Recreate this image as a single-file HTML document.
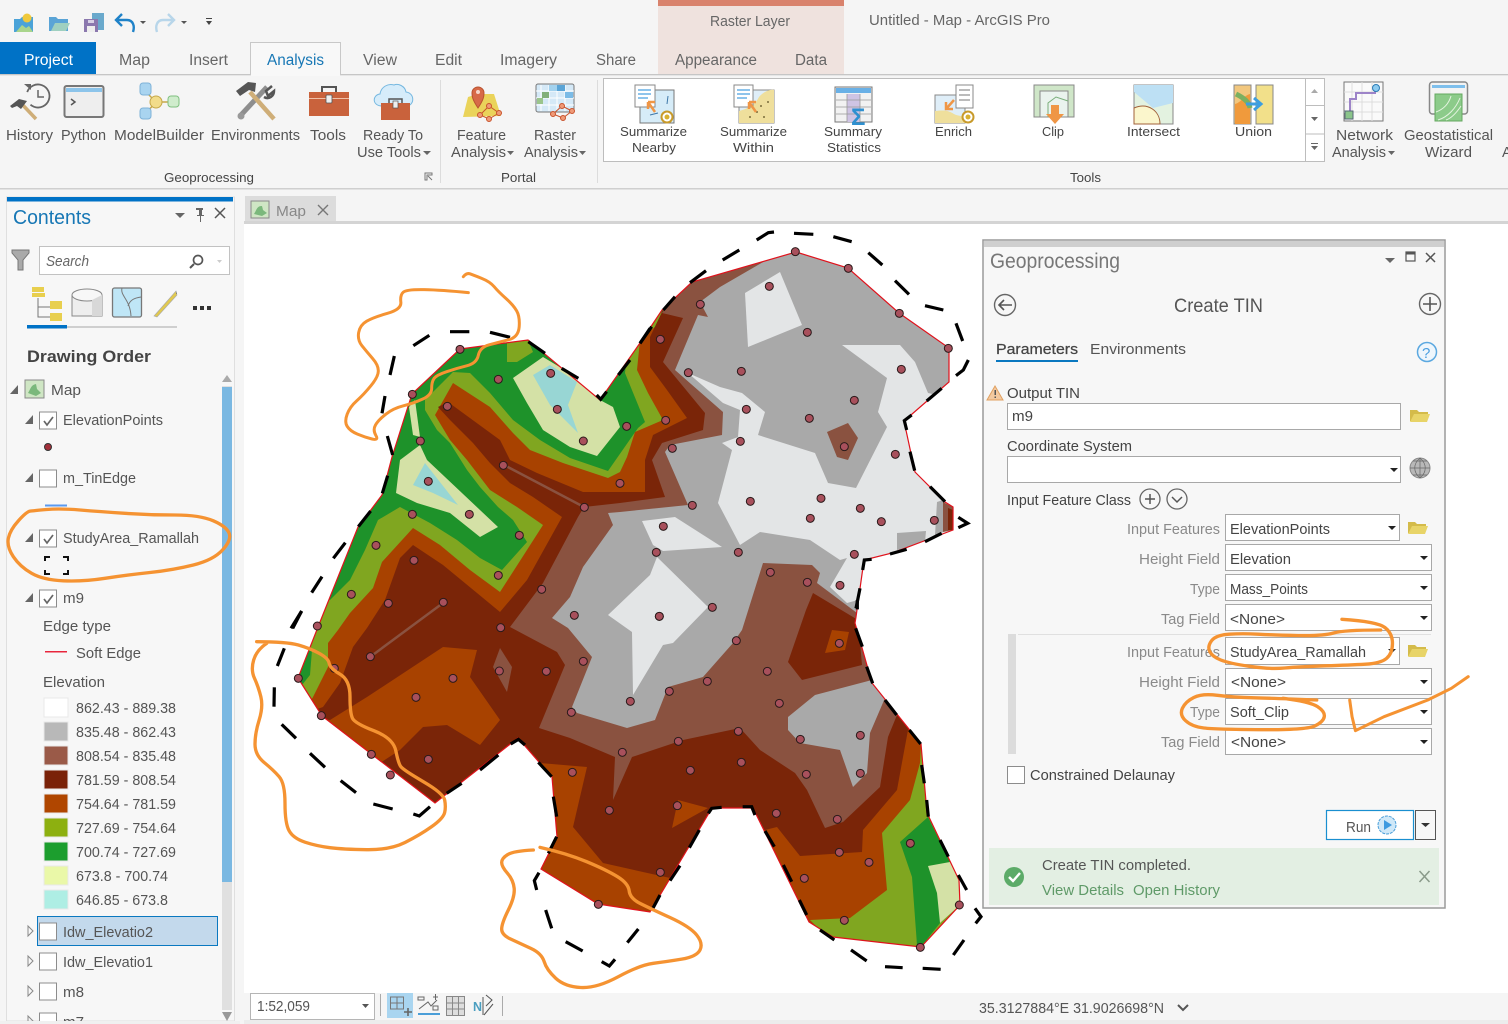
<!DOCTYPE html>
<html><head><meta charset="utf-8"><title>Untitled - Map - ArcGIS Pro</title>
<style>
html,body{margin:0;padding:0;background:#f5f5f5;overflow:hidden}
svg{display:block;filter:blur(.3px)}
text{font-family:"Liberation Sans",sans-serif;fill:#555;font-size:15px;white-space:pre}
.r{font-size:14.5px}.g{font-size:13px;fill:#444}.tb{font-size:15.5px;fill:#666}
.c{font-size:14.5px;fill:#555}.v{font-size:14.5px;fill:#444}.l{font-size:14.5px;fill:#8a8a8a}
.d circle{fill:#a8505c;stroke:#2a1a1a;stroke-width:3}
.dash3{fill:none;stroke:#000;stroke-width:9.6}
.sc{fill:none;stroke:#f59332;stroke-linejoin:round;stroke-linecap:round}
.f{fill:#fff;stroke:#a8a8a8;stroke-width:1}
.cb{fill:#fff;stroke:#8c8c8c;stroke-width:1}
.ck{fill:none;stroke:#666;stroke-width:1.7}
.ar{fill:#222}
</style></head><body>
<svg width="1508" height="1024" viewBox="0 0 1508 1024" xmlns="http://www.w3.org/2000/svg">
<defs>
<clipPath id="o"><polygon points="796,252 848,268 899,313 949,348 949,382 904,421 915,472 945,502 953,507 953,530 892,553 864,560 856,617 855,623 872,683 921,744 927,813 959,880 960,905 921,947 833,937 809,922 753,808 712,808 650,912 598,904 541,869 557,837 552,777 518,738 435,803 322,716 298,678 318,627 358,527 382,495 392,457 412,394 460,349 528,340 600,400 640,343 662,310 692,282"/></clipPath>
<g id="fo"><path d="M0 3h7l2 2h9v2H5L2 14H0z" fill="#d4bb4a"/><path d="M4 7h16l-3 8H0z" fill="#e8d468"/></g>
<g id="coin"><circle r="6.5" fill="#c89a2a"/><circle r="4.5" fill="#fff"/><circle r="2.5" fill="#d8b030"/></g>
</defs>
<rect width="1508" height="1024" fill="#f5f5f5"/>

<!-- context tab -->
<rect x="658" y="0" width="186" height="74" fill="#efe2de"/><rect x="658" y="0" width="186" height="6" fill="#d9826c"/>
<!-- QAT -->
<path d="M14 19h6l2-2h11v15H14z" fill="#4ba3d8"/><path d="M16 32l6-7 4 3 3-2 4 6z" fill="#a9d58c"/><circle cx="27" cy="18" r="4.500" fill="#f0c93c"/>
<path d="M49 17h7l2 2h10v12H49z" fill="#5aa4d6"/><path d="M51 31l4-8h15l-4 8z" fill="#9fd0c0"/>
<rect x="92" y="13" width="12" height="17" fill="#6aa9cc"/><rect x="84" y="19" width="14" height="13" fill="#8b78ae"/><rect x="87" y="26" width="8" height="6" fill="#eee"/><rect x="88" y="20" width="6" height="3" fill="#d8d2e6"/>
<path d="M122 14l-6 6 6 6M117 20h10c6 0 8 6 6 12" fill="none" stroke="#1f82c8" stroke-width="2.400"/>
<path d="M140 21h6l-3 3z" fill="#555"/>
<path d="M168 14l6 6-6 6M173 20h-10c-6 0-8 6-6 12" fill="none" stroke="#b8d6ea" stroke-width="2.400"/>
<path d="M181 21h6l-3 3z" fill="#555"/>
<path d="M206 18h6v1h-6zM206 21h6l-3 4z" fill="#444"/>

<!-- tabs -->
<rect x="0" y="74" width="1508" height="1.3" fill="#c6c6c6"/>
<rect x="0" y="42" width="96" height="32" fill="#0072c6"/>
<path d="M250.500 75V42.500H340.500V75" fill="#f8f8f8" stroke="#c8c8c8"/><rect x="251" y="73" width="89" height="3" fill="#f8f8f8"/>
<text x="24" y="65" textLength="49" lengthAdjust="spacingAndGlyphs" class="tb" style="fill:#fff">Project</text>
<text x="119" y="65" textLength="31" lengthAdjust="spacingAndGlyphs" class="tb">Map</text>
<text x="189" y="65" textLength="39" lengthAdjust="spacingAndGlyphs" class="tb">Insert</text>
<text x="267" y="65" textLength="57" lengthAdjust="spacingAndGlyphs" class="tb" style="fill:#1777b5">Analysis</text>
<text x="363" y="65" textLength="34" lengthAdjust="spacingAndGlyphs" class="tb">View</text>
<text x="435" y="65" textLength="27" lengthAdjust="spacingAndGlyphs" class="tb">Edit</text>
<text x="500" y="65" textLength="57" lengthAdjust="spacingAndGlyphs" class="tb">Imagery</text>
<text x="596" y="65" textLength="40" lengthAdjust="spacingAndGlyphs" class="tb">Share</text>
<text x="675" y="65" textLength="82" lengthAdjust="spacingAndGlyphs" class="tb">Appearance</text>
<text x="795" y="65" textLength="32" lengthAdjust="spacingAndGlyphs" class="tb">Data</text>
<text x="710" y="26" textLength="80" lengthAdjust="spacingAndGlyphs" class="tb" style="font-size:14.500px">Raster Layer</text>
<text x="869" y="25" textLength="181" lengthAdjust="spacingAndGlyphs" class="tb" style="font-size:14.500px">Untitled - Map - ArcGIS Pro</text>

<!-- ribbon -->
<rect x="0" y="188" width="1508" height="1.500" fill="#cfcfcf"/>
<rect x="440" y="80" width="1" height="103" fill="#dcdcdc"/><rect x="597" y="80" width="1" height="103" fill="#dcdcdc"/>
<rect x="603.500" y="78.500" width="721" height="83" fill="#fff" stroke="#bdbdbd"/>
<path d="M1305.500 78v84M1305 105.500h19M1305 134h19" stroke="#bdbdbd" fill="none"/>
<path d="M1311 93l3.500-4 3.500 4z" fill="#aaa"/><path d="M1311 117h7l-3.500 4z" fill="#666"/><path d="M1311 143h7v1h-7zM1311 146h7l-3.500 4z" fill="#666"/>

<text x="6" y="140" textLength="47" lengthAdjust="spacingAndGlyphs" class="r">History</text>
<text x="61" y="140" textLength="45" lengthAdjust="spacingAndGlyphs" class="r">Python</text>
<text x="114" y="140" textLength="90" lengthAdjust="spacingAndGlyphs" class="r">ModelBuilder</text>
<text x="211" y="140" textLength="89" lengthAdjust="spacingAndGlyphs" class="r">Environments</text>
<text x="310" y="140" textLength="36" lengthAdjust="spacingAndGlyphs" class="r">Tools</text>
<text x="363" y="140" textLength="60" lengthAdjust="spacingAndGlyphs" class="r">Ready To</text>
<text x="357" y="157" textLength="64" lengthAdjust="spacingAndGlyphs" class="r">Use Tools</text><path d="M423 151h8l-4 4z" fill="#666"/>
<text x="457" y="140" textLength="49" lengthAdjust="spacingAndGlyphs" class="r">Feature</text>
<text x="451" y="157" textLength="55" lengthAdjust="spacingAndGlyphs" class="r">Analysis</text><path d="M507 151h7l-3.500 4z" fill="#666"/>
<text x="534" y="140" textLength="42" lengthAdjust="spacingAndGlyphs" class="r">Raster</text>
<text x="524" y="157" textLength="54" lengthAdjust="spacingAndGlyphs" class="r">Analysis</text><path d="M579 151h7l-3.500 4z" fill="#666"/>
<text x="1336" y="140" textLength="57" lengthAdjust="spacingAndGlyphs" class="r">Network</text>
<text x="1332" y="157" textLength="54" lengthAdjust="spacingAndGlyphs" class="r">Analysis</text><path d="M1388 151h7l-3.500 4z" fill="#666"/>
<text x="1404" y="140" textLength="89" lengthAdjust="spacingAndGlyphs" class="r">Geostatistical</text>
<text x="1425" y="157" textLength="47" lengthAdjust="spacingAndGlyphs" class="r">Wizard</text>
<text x="1502" y="157" class="r">A</text>
<text x="164" y="182" textLength="90" lengthAdjust="spacingAndGlyphs" class="g">Geoprocessing</text>
<text x="501" y="182" textLength="35" lengthAdjust="spacingAndGlyphs" class="g">Portal</text>
<text x="1070" y="182" textLength="31" lengthAdjust="spacingAndGlyphs" class="g">Tools</text>
<path d="M425 173h7v2h-5v5h-2zM428 176l4 4" stroke="#777" fill="none"/>
<text x="620" y="136" textLength="67" lengthAdjust="spacingAndGlyphs" class="g">Summarize</text>
<text x="632" y="152" textLength="44" lengthAdjust="spacingAndGlyphs" class="g">Nearby</text>
<text x="720" y="136" textLength="67" lengthAdjust="spacingAndGlyphs" class="g">Summarize</text>
<text x="733" y="152" textLength="41" lengthAdjust="spacingAndGlyphs" class="g">Within</text>
<text x="824" y="136" textLength="58" lengthAdjust="spacingAndGlyphs" class="g">Summary</text>
<text x="827" y="152" textLength="54" lengthAdjust="spacingAndGlyphs" class="g">Statistics</text>
<text x="935" y="136" textLength="37" lengthAdjust="spacingAndGlyphs" class="g">Enrich</text>
<text x="1042" y="136" textLength="22" lengthAdjust="spacingAndGlyphs" class="g">Clip</text>
<text x="1127" y="136" textLength="53" lengthAdjust="spacingAndGlyphs" class="g">Intersect</text>
<text x="1235" y="136" textLength="37" lengthAdjust="spacingAndGlyphs" class="g">Union</text>

<!-- ribbon icons -->
<circle cx="38" cy="96" r="11.500" fill="none" stroke="#666" stroke-width="1.800" stroke-dasharray="58 14" transform="rotate(200 38 96)"/><path d="M38 90v7h6" fill="none" stroke="#666" stroke-width="1.500"/><path d="M24 84h7v6z" fill="#666"/>
<path d="M19 101l17 18" stroke="#cfae78" stroke-width="3.500"/><path d="M10 106l9-7 8 2-6 8-4-3-5 2z" fill="#555"/>
<rect x="64.500" y="86" width="39" height="31" rx="2" fill="#eee" stroke="#777" stroke-width="2"/><rect x="66" y="88" width="36" height="4" fill="#8cc4ea"/><path d="M71 99l4 3-4 3" fill="none" stroke="#555" stroke-width="1.500"/>
<path d="M146 92l10 10-10 11M156 102h14" stroke="#c7a84a" stroke-width="1.500" fill="none"/>
<rect x="140" y="83" width="11" height="12" rx="3" fill="#a9d4f0" stroke="#7fb2d8"/><rect x="140" y="108" width="11" height="11" rx="3" fill="#a9d4f0" stroke="#7fb2d8"/><circle cx="156" cy="102" r="6" fill="#f2dc8a" stroke="#c5a84a"/><rect x="168" y="96" width="11" height="11" rx="3" fill="#cfeccc" stroke="#7fc07f"/>
<path d="M241 115l26-28" stroke="#8e8e8e" stroke-width="5"/><path d="M272 86l-6 5 2 5 6-5c0 5-5 9-10 6" fill="none" stroke="#555" stroke-width="2.500"/><circle cx="241" cy="116" r="3.500" fill="#999"/>
<path d="M250 92l24 27" stroke="#cfae78" stroke-width="4.500"/><path d="M236 91l12-9 8 1-1 9-6-2-9 6z" fill="#555"/>
<rect x="309" y="92" width="40" height="24" fill="#c9623c"/><path d="M322 92v-5h14v5" fill="none" stroke="#555" stroke-width="2"/><rect x="309" y="98" width="40" height="1" fill="#f0c0a8"/><rect x="326" y="95" width="6" height="8" rx="1" fill="#eee" stroke="#555" stroke-width=".8"/>
<path d="M382 106c-10 0-10-11-2-12 1-7 8-11 14-9 4-2 11 1 12 7 9 1 9 14 0 14z" fill="#d6ecfa" stroke="#76b8e0"/>
<rect x="381" y="103" width="29" height="17" fill="#c9623c"/><path d="M389 103v-4h13v4" fill="none" stroke="#555" stroke-width="1.500"/><rect x="393" y="101" width="5" height="7" fill="#eee" stroke="#555" stroke-width=".7"/>
<path d="M468 97l10-3 16 0 7 22-38 1z" fill="#ead35a"/><path d="M478 108c-6-9-6-12-6-15a6 6 0 0 1 12 0c0 3 0 6-6 15z" fill="#d76a48" stroke="#b9532f"/><circle cx="478" cy="92" r="2" fill="#f5d6c9"/>
<g fill="#ef9a78" stroke="#c9532c"><path d="M480 115l9-9 10 7-10 6z" fill="none"/><circle cx="480" cy="115" r="2.500"/><circle cx="489" cy="106" r="2.500"/><circle cx="499" cy="113" r="2.500"/><circle cx="489" cy="119" r="2.500"/></g>
<rect x="536" y="84" width="38" height="28" rx="2" fill="#d5e9f7" stroke="#777"/>
<path d="M541 85v26M549 85v26M557 85v26M565 85v26M536 91h38M536 98h38M536 105h38" stroke="#fff" stroke-width="1"/>
<rect x="542" y="92" width="7" height="6" fill="#82b07a"/><rect x="557" y="85" width="8" height="6" fill="#5aa4d6"/><rect x="549" y="85" width="8" height="6" fill="#a3d2ee"/><rect x="565" y="92" width="8" height="6" fill="#7bbbe6"/><rect x="537" y="98" width="6" height="6" fill="#9bc58c"/>
<g fill="#ef9a78" stroke="#c9532c"><path d="M553 114l9-8 10 5-9 7z" fill="none"/><circle cx="553" cy="114" r="2.500"/><circle cx="562" cy="106" r="2.500"/><circle cx="572" cy="111" r="2.500"/><circle cx="563" cy="118" r="2.500"/></g>

<rect x="640" y="90" width="34" height="33" fill="#d6ecf8" stroke="#777"/><path d="M650 115l8-2M668 96l-1 8" stroke="#3d77a8"/>
<rect x="635" y="85" width="20" height="22" fill="#fff" stroke="#888"/><path d="M638 90h13M638 94h13M638 98h10" stroke="#69b0e6" stroke-width="1.500"/>
<path d="M655 112l-7-10M648 102v7M648 102h7" stroke="#ef9646" stroke-width="2.500" fill="none"/><use href="#coin" x="667" y="117"/>
<rect x="739" y="90" width="35" height="33" fill="#dfeef8" stroke="#888"/><path d="M739 123v-12c8-2 16-6 20-14 4-5 11-8 15-7v33z" fill="#efdf9c"/>
<g fill="#7a6c3a"><circle cx="750" cy="117" r="1"/><circle cx="757" cy="112" r="1"/><circle cx="764" cy="117" r="1"/><circle cx="768" cy="102" r="1"/><circle cx="761" cy="106" r="1"/></g>
<rect x="734" y="85" width="19" height="22" fill="#fff" stroke="#888"/><path d="M737 90h13M737 94h13M737 98h10" stroke="#69b0e6" stroke-width="1.500"/>
<path d="M756 112l-7-10M749 102v7M749 102h7" stroke="#ef9646" stroke-width="2.500" fill="none"/>
<rect x="835" y="87" width="37" height="35" fill="#f2f2f2" stroke="#777"/><rect x="836" y="88" width="35" height="5" fill="#69b0e6"/><rect x="847" y="94" width="13" height="28" fill="#cfc4e4"/>
<path d="M836 100h35M836 107h35M836 114h35M847 94v28M860 94v28" stroke="#999" stroke-width=".8"/><text x="851" y="125" style="font-size:24px;fill:#2f90d0;font-weight:bold">&#931;</text>
<rect x="935" y="95" width="30" height="28" fill="#dfeef8" stroke="#888"/><path d="M935 123v-12c8-1 13-1 19 3 3 2 7 1 11 4v5z" fill="#efdf9c"/>
<rect x="956" y="85" width="17" height="23" fill="#fff" stroke="#888"/><path d="M959 90h11M959 95h11M959 100h11" stroke="#777"/>
<path d="M954 100l-8 9M946 102v7h7" stroke="#ef9646" stroke-width="2.500" fill="none"/><use href="#coin" x="968" y="117"/>
<rect x="1034" y="85" width="40" height="32" fill="#cfe6c8" stroke="#888"/><rect x="1040" y="91" width="28" height="26" fill="#eaf3ee" stroke="#888"/><path d="M1048 117v-14l8-6 12 4" fill="none" stroke="#79ae7a"/>
<path d="M1051 105h8v9h5l-9 10-9-10h5z" fill="#ef9646"/>
<rect x="1134" y="85" width="39" height="39" fill="#e3f2e0" stroke="#888"/><path d="M1134 85h39v18l-20 5-19-16z" fill="#bde0f4"/><path d="M1134 108c14-6 26 3 26 16h-26z" fill="#fbf6cc" stroke="#a0603a"/>
<rect x="1234" y="85" width="17" height="39" fill="#f2c77e" stroke="#888"/><path d="M1235 124v-20c7-2 8-8 15-10v30z" fill="#f09a3c"/><path d="M1236 94c8 4 13 8 14 14" stroke="#7bb060" stroke-width="5" fill="none"/>
<rect x="1256" y="85" width="17" height="39" fill="#f2e08a" stroke="#888"/><path d="M1246 104h14m-6-6l7 6-7 6" stroke="#3d9ee0" stroke-width="3" fill="none"/>
<rect x="1344" y="82" width="39" height="39" fill="#fafafa" stroke="#777"/><path d="M1352 82v39M1362 82v39M1372 82v39M1344 92h39M1344 102h39M1344 112h39" stroke="#ddd"/><path d="M1350 113v-14h6v-6h19v-8" stroke="#9d84c8" stroke-width="2" fill="none"/><rect x="1345" y="111" width="8" height="8" fill="#8ac48a" stroke="#567"/><circle cx="1376" cy="88" r="3.500" fill="#8ccbf0" stroke="#2b7cb6"/>
<rect x="1429.500" y="82" width="38" height="32" rx="3" fill="#f3f3f3" stroke="#888" stroke-width="1.500"/><rect x="1432" y="85" width="33" height="3" fill="#7ebfec"/>
<rect x="1435" y="94" width="27" height="27" fill="#8ccb8a" stroke="#65a860"/><path d="M1438 120c10-3 18-12 22-22M1446 120c6-2 11-8 15-14M1436 112c8-3 13-9 15-16" stroke="#e4f4e0" fill="none"/>

<!-- Contents pane -->
<rect x="6.500" y="197" width="228" height="824" fill="#f7f7f7" stroke="#dfdfdf"/><rect x="7" y="197" width="226" height="4.500" fill="#0072c6"/>
<text x="13" y="224" textLength="78" lengthAdjust="spacingAndGlyphs" style="font-size:20px;fill:#1777b5">Contents</text>
<path d="M175 213h10l-5 5z" fill="#666"/><path d="M196 208h7v2h-1v5h2v1h-3v6h-1v-6h-3v-1h2v-5h-3z" fill="#666"/><path d="M215 208l10 10M225 208l-10 10" stroke="#555" stroke-width="1.500"/>
<path d="M12 250h17v3l-6 7v10h-5v-10l-6-7z" fill="#aaa" stroke="#777"/>
<rect x="39.500" y="246.500" width="190" height="28" fill="#fff" stroke="#c2c2c2"/>
<text x="46" y="266" textLength="43" lengthAdjust="spacingAndGlyphs" style="font-size:14.500px;font-style:italic;fill:#666">Search</text>
<circle cx="198" cy="260" r="4.500" fill="none" stroke="#555" stroke-width="1.700"/><path d="M194 264l-4 4" stroke="#555" stroke-width="2"/><path d="M217 260h5l-2.500 3z" fill="#ccc"/>
<rect x="32" y="287" width="12" height="5" fill="#e8cf4e"/><rect x="32" y="293" width="13" height="4" fill="#e8cf4e"/><path d="M38 298v19h12M38 307h12" stroke="#777" fill="none"/><rect x="50" y="301" width="12" height="8" fill="#e8cf4e"/><rect x="50" y="313" width="12" height="8" fill="#e8cf4e"/>
<rect x="72" y="295" width="30" height="21" fill="#eee" stroke="#888"/><ellipse cx="87" cy="295" rx="15" ry="6" fill="#f7f7f7" stroke="#888"/><path d="M92 300v16h10v-21z" fill="#d8d8d8"/>
<rect x="112.500" y="288" width="29" height="29" rx="2" fill="#bfe6f6" stroke="#777" stroke-width="1.300"/><path d="M122 288c-2 8 8 11 9 28M128 306c2-6 6-8 13-9" stroke="#777" fill="none"/>
<path d="M154 316l22-25 1 4-20 22z" fill="#e1c94f" stroke="#aaa" stroke-width=".6"/><path d="M176 291l1 3-1 0z" fill="#777"/>
<rect x="193" y="306" width="4" height="4" fill="#333"/><rect x="200" y="306" width="4" height="4" fill="#333"/><rect x="207" y="306" width="4" height="4" fill="#333"/>
<rect x="67" y="326" width="110" height="2" fill="#cfcfcf"/><rect x="27" y="325" width="40" height="3.500" fill="#0072c6"/>
<text x="27" y="362" textLength="124" lengthAdjust="spacingAndGlyphs" style="font-size:17px;font-weight:bold;fill:#444">Drawing Order</text>

<path d="M18 385v9h-8z" fill="#666"/><rect x="25" y="380" width="19" height="18" fill="#cfe6c4" stroke="#888"/><path d="M28 393c3-5 3-8 8-9l1 5 4 4-5 3z" fill="#7bb87c"/>
<text x="51" y="395" textLength="30" lengthAdjust="spacingAndGlyphs" class="c">Map</text>
<path d="M33 415v9h-8z" fill="#666"/><rect x="39.500" y="412" width="17" height="17" class="cb"/><path d="M44 421l3 4 6-8" class="ck"/>
<text x="63" y="425" textLength="100" lengthAdjust="spacingAndGlyphs" class="c">ElevationPoints</text>
<circle cx="48" cy="447" r="3.500" fill="#a3303a" stroke="#333"/>
<path d="M33 473v9h-8z" fill="#666"/><rect x="39.500" y="470" width="17" height="17" class="cb"/>
<text x="63" y="483" textLength="73" lengthAdjust="spacingAndGlyphs" class="c">m_TinEdge</text>
<rect x="45" y="504.500" width="22" height="2" fill="#5a9af0"/>
<path d="M33 533v9h-8z" fill="#666"/><rect x="39.500" y="530" width="17" height="17" class="cb"/><path d="M44 539l3 4 6-8" class="ck"/>
<text x="63" y="543" textLength="136" lengthAdjust="spacingAndGlyphs" class="c">StudyArea_Ramallah</text>
<path d="M45 561v-4h5M63 557h5v4M45 570v4h5M63 574h5v-4" fill="none" stroke="#111" stroke-width="2"/>
<path d="M33 593v9h-8z" fill="#666"/><rect x="39.500" y="590" width="17" height="17" class="cb"/><path d="M44 599l3 4 6-8" class="ck"/>
<text x="63" y="603" textLength="21" lengthAdjust="spacingAndGlyphs" class="c">m9</text>
<text x="43" y="631" textLength="68" lengthAdjust="spacingAndGlyphs" class="c">Edge type</text>
<rect x="45" y="651" width="22" height="1.500" fill="#e8263c"/>
<text x="76" y="658" textLength="65" lengthAdjust="spacingAndGlyphs" class="c">Soft Edge</text>
<text x="43" y="687" textLength="62" lengthAdjust="spacingAndGlyphs" class="c">Elevation</text>
<g stroke="#e8e8e8" stroke-width="1">
<rect x="44" y="698" width="24" height="19" fill="#fff"/><rect x="44" y="722" width="24" height="19" fill="#b8b8b8"/><rect x="44" y="746" width="24" height="19" fill="#9a5a48"/><rect x="44" y="770" width="24" height="19" fill="#7a2208"/><rect x="44" y="794" width="24" height="19" fill="#b04600"/><rect x="44" y="818" width="24" height="19" fill="#8db010"/><rect x="44" y="842" width="24" height="19" fill="#1c9e2e"/><rect x="44" y="866" width="24" height="19" fill="#eaf8a8"/><rect x="44" y="890" width="24" height="19" fill="#aeeee4"/>
</g>
<text x="76" y="713" textLength="100" lengthAdjust="spacingAndGlyphs" class="c">862.43 - 889.38</text>
<text x="76" y="737" textLength="100" lengthAdjust="spacingAndGlyphs" class="c">835.48 - 862.43</text>
<text x="76" y="761" textLength="100" lengthAdjust="spacingAndGlyphs" class="c">808.54 - 835.48</text>
<text x="76" y="785" textLength="100" lengthAdjust="spacingAndGlyphs" class="c">781.59 - 808.54</text>
<text x="76" y="809" textLength="100" lengthAdjust="spacingAndGlyphs" class="c">754.64 - 781.59</text>
<text x="76" y="833" textLength="100" lengthAdjust="spacingAndGlyphs" class="c">727.69 - 754.64</text>
<text x="76" y="857" textLength="100" lengthAdjust="spacingAndGlyphs" class="c">700.74 - 727.69</text>
<text x="76" y="881" textLength="92" lengthAdjust="spacingAndGlyphs" class="c">673.8 - 700.74</text>
<text x="76" y="905" textLength="92" lengthAdjust="spacingAndGlyphs" class="c">646.85 - 673.8</text>
<rect x="37.500" y="916.500" width="180" height="29" fill="#c3d9ec" stroke="#0a78c0"/>
<rect x="39.500" y="923" width="17" height="17" class="cb"/>
<text x="63" y="937" textLength="90" lengthAdjust="spacingAndGlyphs" class="c">Idw_Elevatio2</text>
<path d="M28 926l5 5-5 5z" fill="none" stroke="#888"/>
<rect x="39.500" y="953" width="17" height="17" class="cb"/>
<text x="63" y="967" textLength="90" lengthAdjust="spacingAndGlyphs" class="c">Idw_Elevatio1</text>
<path d="M28 956l5 5-5 5z" fill="none" stroke="#888"/>
<rect x="39.500" y="983" width="17" height="17" class="cb"/>
<text x="63" y="997" textLength="21" lengthAdjust="spacingAndGlyphs" class="c">m8</text>
<path d="M28 986l5 5-5 5z" fill="none" stroke="#888"/>
<rect x="39.500" y="1013" width="17" height="17" class="cb"/>
<text x="63" y="1027" textLength="21" lengthAdjust="spacingAndGlyphs" class="c">m7</text>
<path d="M28 1016l5 5-5 5z" fill="none" stroke="#888"/>
<rect x="0" y="1021" width="240" height="3" fill="#f0f0f0"/>
<rect x="222" y="386" width="10" height="624" fill="#e0e0e0"/><rect x="222" y="387" width="10" height="495" fill="#7ab8e2"/>
<path d="M222 382l5-7 5 7z" fill="#aaa"/><path d="M222 1012h10l-5 9z" fill="#999"/>

<!-- Map view -->
<rect x="245" y="196" width="91" height="25" fill="#dcdcdc"/>
<rect x="251" y="201" width="18" height="17" fill="#cfe6c4" stroke="#888"/><path d="M254 214c3-5 3-8 8-8l1 4 4 3-5 3z" fill="#7bb87c"/>
<text x="276" y="216" textLength="30" lengthAdjust="spacingAndGlyphs" style="font-size:15px;fill:#888">Map</text>
<path d="M318 205l10 10M328 205l-10 10" stroke="#777" stroke-width="1.400"/>
<rect x="244" y="221" width="1264" height="3" fill="#d4d4d4"/>
<rect x="244" y="224" width="1264" height="769" fill="#fff"/>
<rect x="244" y="993" width="1264" height="27" fill="#f5f5f5"/><rect x="244" y="1020" width="1264" height="4" fill="#ececec"/>
<rect x="250.500" y="993.500" width="124" height="26" fill="#fff" stroke="#b5b5b5"/>
<text x="257" y="1011" textLength="53" lengthAdjust="spacingAndGlyphs" style="font-size:15px;fill:#555">1:52,059</text><path d="M362 1004h7l-3.500 4z" fill="#555"/>
<rect x="380" y="994" width="1" height="22" fill="#aaa"/>
<rect x="387" y="993" width="26" height="25" fill="#a9d5f0"/><path d="M390.500 997h13v12h-13zM390.500 1003h13M397 997v12" fill="none" stroke="#777"/><path d="M404 1012h8M408 1008v8" stroke="#666" stroke-width="1.600"/>
<path d="M418 1014h22" stroke="#4a9ed8" stroke-width="2"/><path d="M419 1009l9-7 3 4 6-6M433 997h5M435.500 994v6" stroke="#666" fill="none"/><rect x="418" y="997" width="6" height="3" fill="none" stroke="#666"/><rect x="433" y="1006" width="5" height="4" fill="none" stroke="#666"/>
<rect x="446.500" y="996.500" width="18" height="19" fill="#ddd" stroke="#888"/><path d="M452.500 997v19M458.500 997v19M447 1003h18M447 1009h18" stroke="#888"/>
<text x="473" y="1011" style="font-size:12.500px;font-weight:bold;fill:#4a9ec0">N</text><path d="M483 997v18M484 1015l9-11M486 995l6 5-6 6" fill="none" stroke="#555"/>
<rect x="502" y="996" width="1" height="20" fill="#aaa"/>
<text x="979" y="1013" textLength="185" lengthAdjust="spacingAndGlyphs" style="font-size:14.500px;fill:#555">35.3127884°E 31.9026698°N</text>
<path d="M1178 1005l5 5 5-5" fill="none" stroke="#555" stroke-width="2"/>

<!-- TIN map -->
<g clip-path="url(#o)">
<rect x="250" y="230" width="740" height="730" fill="#1e922a"/>
<polygon fill="#80a620" points="330,600 350,580 365,550 378,520 400,507 430,523 457,540 480,558 502,570 527,542 513,520 498,507 480,487 467,470 450,443 437,430 425,410 425,400 442,383 453,372 470,373 490,393 513,420 540,440 570,458 608,471 638,428 645,422 625,373 627,355 640,330 800,200 1000,300 1000,1000 250,1000 250,690 298,690 310,675 312,650 300,640 322,600"/>
<polygon fill="#80a620" points="507,343 528,340 533,352 517,362 507,362"/>
<polygon fill="#d4e1a6" points="513,378 543,357 578,378 600,400 613,407 620,427 597,456 570,447 543,430 527,403"/>
<polygon fill="#98d6d4" points="533,375 550,365 577,382 568,405 578,433 550,405"/>
<polygon fill="#d4e1a6" points="396,493 400,460 420,445 427,460 498,527 480,537 450,513 417,503"/>
<polygon fill="#98d6d4" points="413,485 425,463 458,505 433,493"/>
<polygon fill="#d4e1a6" points="409,407 415,400 420,437 413,435"/>
<polygon fill="#a84200" points="338,630 350,613 373,588 382,562 413,528 440,545 470,570 500,592 543,525 517,507 490,490 467,460 450,440 435,415 453,383 490,407 513,433 530,450 563,463 608,478 620,472 627,457 635,432 663,420 648,393 637,370 640,340 800,200 1000,300 1000,1000 250,1000 250,720 300,720 313,697 328,667 328,643"/>
<polygon fill="#7a2508" points="323,707 340,683 353,647 367,628 385,600 400,558 413,545 443,565 477,593 500,612 527,580 562,517 533,497 510,483 490,463 473,443 450,420 438,407 448,402 500,440 510,460 537,473 583,492 645,492 645,460 653,435 687,418 667,390 650,367 650,337 662,312 700,250 1000,300 1000,620 915,722 908,730 903,757 897,790 863,830 862,852 800,856 777,827 765,830 720,840 650,960 250,960 250,720 300,715"/>
<polygon fill="#a84200" points="300,715 330,720 367,697 443,647 477,650 470,677 500,720 480,745 447,725 423,727 400,750 380,763 340,760"/>
<polygon fill="#a84200" points="530,770 540,763 587,767 573,827 603,863 670,878 660,930 530,890"/>
<polygon fill="#a84200" points="678,800 708,808 672,828"/>
<polygon fill="#8a5240" points="539,728 570,738 615,757 613,800 632,757 683,740 740,728 760,750 795,773 807,790 825,828 843,822 880,787 888,737 897,715 1000,700 1000,300 800,240 700,260 662,313 683,318 663,362 705,413 703,430 662,443 652,460 665,497 620,503 584,507 578,517 543,583 513,623 510,627 557,652 565,665"/>
<polygon fill="#7a2508" points="813,593 858,620 862,665 802,680 788,662 806,610"/>
<polygon fill="#a84200" points="832,630 849,632 845,650 825,653"/>
<polygon fill="#8a5240" points="500,648 493,667 507,692 512,667"/>
<path d="M370 657L443 603M504 465L584 507" stroke="#8a5240" stroke-width="2.500" fill="none"/>
<polygon fill="#a9a9a9" points="608,513 620,512 688,505 665,452 670,445 722,435 723,412 675,370 698,315 708,317 700,302 720,287 770,258 795,252 1000,240 1000,560 857,613 817,583 820,573 812,565 763,563 742,630 733,643 703,677 668,687 655,720 627,728 577,713 572,707 592,657 568,628 552,618 570,597 583,567 613,525"/>
<polygon fill="#a9a9a9" points="872,680 815,695 788,717 788,730 800,743 840,750 853,787 867,773 870,733 885,698"/>
<polygon fill="#e3e5e6" points="745,293 780,272 802,325 748,347"/>
<polygon fill="#e3e5e6" points="842,345 900,345 915,362 928,393 960,400 1000,400 1000,600 858,600 847,603 830,587 847,558 840,560 810,540 760,532 740,545 718,503 732,450 722,443 738,437 740,410 723,403 688,373 720,387 742,393 765,412 758,435 815,453 828,483 856,488 887,427 878,412 887,378"/>
<polygon fill="#e3e5e6" points="642,521 675,517 722,547 663,551 653,545"/>
<polygon fill="#e3e5e6" points="657,557 708,607 673,643 663,645 633,695 632,632 608,615 650,575"/>
<polygon fill="#a9a9a9" points="897,533 926,531 925,542 907,548 897,550"/>
<polygon fill="#a9a9a9" points="937,502 943,500 943,532 935,535"/>
<polygon fill="#8a5240" points="943,502 953,507 953,530 943,532"/>
<polygon fill="#7a2508" points="948,508 953,510 953,530 948,530"/>
<polygon fill="#8a5240" points="827,432 848,423 858,438 848,460 837,457"/>
<polygon fill="#80a620" points="920,763 910,800 882,833 887,890 850,918 810,920 820,930 833,937 921,947 960,905 959,880 927,813 921,744"/>
<polygon fill="#1e922a" points="928,817 900,842 912,877 917,945 921,947 940,923 960,905 959,880"/>
<polygon fill="#d4e1a6" points="928,866 950,862 959,880 960,905 940,923 937,893"/>
</g>
<polygon points="796,252 848,268 899,313 949,348 949,382 904,421 915,472 945,502 953,507 953,530 892,553 864,560 856,617 855,623 872,683 921,744 927,813 959,880 960,905 921,947 833,937 809,922 753,808 712,808 650,912 598,904 541,869 557,837 552,777 518,738 435,803 322,716 298,678 318,627 358,527 382,495 392,457 412,394 460,349 528,340 600,400 640,343 662,310 692,282" fill="none" stroke="#e0121c" stroke-width="1.200"/>

<!-- points -->
<g class="d" transform="translate(250 230) scale(.33333)"><circle cx="630" cy="358" r="12"/><circle cx="745" cy="448" r="12"/><circle cx="902" cy="430" r="12"/><circle cx="922" cy="538" r="12"/><circle cx="487" cy="493" r="12"/><circle cx="592" cy="529" r="12"/><circle cx="1000" cy="633" r="12"/><circle cx="1130" cy="589" r="12"/><circle cx="511" cy="633" r="12"/><circle cx="760" cy="706" r="12"/><circle cx="1110" cy="760" r="12"/><circle cx="535" cy="754" r="12"/><circle cx="1003" cy="832" r="12"/><circle cx="487" cy="853" r="12"/><circle cx="658" cy="853" r="12"/><circle cx="808" cy="916" r="12"/><circle cx="378" cy="946" r="12"/><circle cx="492" cy="991" r="12"/><circle cx="745" cy="1036" r="12"/><circle cx="875" cy="1078" r="12"/><circle cx="304" cy="1093" r="12"/><circle cx="415" cy="1120" r="12"/><circle cx="580" cy="1117" r="12"/><circle cx="973" cy="1156" r="12"/><circle cx="202" cy="1188" r="12"/><circle cx="752" cy="1193" r="12"/></g>
<g class="d" transform="translate(620 230) scale(.33333)"><circle cx="526" cy="65" r="12"/><circle cx="685" cy="115" r="12"/><circle cx="838" cy="250" r="12"/><circle cx="985" cy="355" r="12"/><circle cx="448" cy="169" r="12"/><circle cx="241" cy="223" r="12"/><circle cx="562" cy="307" r="12"/><circle cx="121" cy="328" r="12"/><circle cx="205" cy="428" r="12"/><circle cx="364" cy="424" r="12"/><circle cx="844" cy="418" r="12"/><circle cx="703" cy="511" r="12"/><circle cx="379" cy="538" r="12"/><circle cx="568" cy="565" r="12"/><circle cx="137" cy="571" r="12"/><circle cx="361" cy="634" r="12"/><circle cx="157" cy="655" r="12"/><circle cx="673" cy="650" r="12"/><circle cx="826" cy="673" r="12"/><circle cx="217" cy="826" r="12"/><circle cx="391" cy="814" r="12"/><circle cx="603" cy="805" r="12"/><circle cx="721" cy="835" r="12"/><circle cx="571" cy="865" r="12"/><circle cx="784" cy="875" r="12"/><circle cx="943" cy="871" r="12"/><circle cx="130" cy="889" r="12"/><circle cx="109" cy="967" r="12"/><circle cx="355" cy="967" r="12"/><circle cx="703" cy="973" r="12"/><circle cx="451" cy="1027" r="12"/><circle cx="562" cy="1057" r="12"/><circle cx="660" cy="1066" r="12"/><circle cx="277" cy="1132" r="12"/><circle cx="118" cy="1159" r="12"/></g>
<g class="d" transform="translate(500 600) scale(.33333)"><circle cx="478" cy="49" r="12"/><circle cx="709" cy="122" r="12"/><circle cx="1018" cy="130" r="12"/><circle cx="250" cy="184" r="12"/><circle cx="139" cy="214" r="12"/><circle cx="802" cy="214" r="12"/><circle cx="622" cy="244" r="12"/><circle cx="508" cy="274" r="12"/><circle cx="391" cy="304" r="12"/><circle cx="214" cy="337" r="12"/><circle cx="838" cy="310" r="12"/><circle cx="901" cy="418" r="12"/><circle cx="1081" cy="406" r="12"/><circle cx="715" cy="394" r="12"/><circle cx="535" cy="424" r="12"/><circle cx="367" cy="457" r="12"/><circle cx="724" cy="487" r="12"/><circle cx="571" cy="511" r="12"/><circle cx="217" cy="517" r="12"/><circle cx="919" cy="523" r="12"/><circle cx="1081" cy="520" r="12"/><circle cx="532" cy="617" r="12"/><circle cx="328" cy="631" r="12"/><circle cx="829" cy="640" r="12"/><circle cx="1012" cy="658" r="12"/><circle cx="1018" cy="757" r="12"/><circle cx="1107" cy="787" r="12"/><circle cx="481" cy="817" r="12"/><circle cx="913" cy="835" r="12"/><circle cx="1231" cy="730" r="12"/><circle cx="295" cy="913" r="12"/><circle cx="1033" cy="961" r="12"/><circle cx="1261" cy="1042" r="12"/><circle cx="1378" cy="915" r="12"/></g>
<g class="d" transform="translate(0 600) scale(.33333)"><circle cx="1003" cy="205" r="12"/><circle cx="1111" cy="170" r="12"/><circle cx="895" cy="235" r="12"/><circle cx="1498" cy="213" r="12"/><circle cx="1359" cy="235" r="12"/><circle cx="1248" cy="292" r="12"/><circle cx="964" cy="347" r="12"/><circle cx="1114" cy="463" r="12"/><circle cx="1285" cy="478" r="12"/><circle cx="1171" cy="525" r="12"/></g>

<!-- black dashes -->
<g class="dash3" transform="translate(250 230) scale(.33333)"><path d="M720 307L780 322M600 305H658M490 347L538 316M433 378L420 435M405 498L396 550M412 618L428 675M413 737L397 790M362 843L325 890M286 938L250 985M216 1040L185 1088M155 1143L123 1195M835 335L885 370M935 415L985 445M1040 495L1052 508L1070 485M1105 435L1140 390M1170 340L1200 295"/></g>
<g class="dash3" transform="translate(620 230) scale(.33333)"><path d="M60 340L95 290M130 240L165 200M210 158L258 122M308 90L358 60M410 30L445 8L462 6M522 10L580 13M640 20L695 35M745 68L787 105M825 152L867 193M915 227L970 240M1008 280L1028 333M1045 390L1030 420L1008 437M965 475L920 513M875 555L853 572L860 600M870 665L884 722M930 770L975 815M1015 862L1043 880L1015 893M965 910L915 935M860 958L810 972M755 988L733 990L728 1020M720 1075L708 1135"/></g>
<g class="dash3" transform="translate(500 600) scale(.33333)"><path d="M1072 0V28M1067 85L1087 140M1100 200L1118 250M1155 300L1190 345M1228 390L1262 432M1265 495L1273 550M1280 600L1285 650M1320 720L1345 770M1375 825L1400 870M1425 925L1443 950L1427 970M1392 1020L1360 1065M1322 1108L1268 1105M1208 1103L1155 1100M1100 1083L1053 1050M1003 1020L960 990M920 945L898 900M875 845L850 795M823 740L795 693M765 645L755 620L728 620M665 622L635 625L625 640M598 690L568 743M540 797L510 842M480 885L455 932M415 987L382 1028M345 1078L328 1098L305 1085M248 1053L197 1025M155 985L137 930M110 870L103 842L117 818M145 760L170 710M170 650L160 590M155 530L115 487M75 435L55 418L32 432"/></g>
<g class="dash3" transform="translate(0 600) scale(.33333)"><path d="M1495 465L1440 510M1385 550L1340 580M1290 620L1258 648L1240 642M1178 627L1120 612M1068 578L1022 542M975 502L930 460M888 415L845 373M822 320L823 262M832 198L853 145M878 85L905 33"/></g>

<!-- Geoprocessing pane -->
<rect x="983" y="240" width="462" height="668" fill="#f7f7f7" stroke="#9a9a9a" stroke-width="1.500"/>
<rect x="984" y="241" width="460" height="6" fill="#cfcfcf"/>
<text x="990" y="268" textLength="130" lengthAdjust="spacingAndGlyphs" style="font-size:21px;fill:#777">Geoprocessing</text>
<path d="M1385 258h10l-5 5z" fill="#666"/><rect x="1406" y="252" width="9" height="9" fill="none" stroke="#555" stroke-width="1.200"/><rect x="1406" y="252" width="9" height="2.500" fill="#555"/><path d="M1426 253l9 9M1435 253l-9 9" stroke="#555" stroke-width="1.500"/>
<circle cx="1005" cy="305" r="10.500" fill="none" stroke="#666" stroke-width="1.400"/><path d="M1012 305h-13m5-5l-5 5 5 5" fill="none" stroke="#555" stroke-width="1.600"/>
<text x="1174" y="312" textLength="89" lengthAdjust="spacingAndGlyphs" style="font-size:19px;fill:#555">Create TIN</text>
<circle cx="1430" cy="304" r="10.500" fill="none" stroke="#666" stroke-width="1.400"/><path d="M1430 297v14M1423 304h14" stroke="#555" stroke-width="1.600"/>
<text x="996" y="354" textLength="82" lengthAdjust="spacingAndGlyphs" style="font-size:15px;fill:#444;stroke:#444;stroke-width:.25">Parameters</text>
<text x="1090" y="354" textLength="96" lengthAdjust="spacingAndGlyphs" style="font-size:15px;fill:#555">Environments</text>
<rect x="996" y="360" width="82" height="2" fill="#0a78c0"/>
<circle cx="1427" cy="352" r="9.500" fill="#eef6fc" stroke="#5ba8e0" stroke-width="1.500"/><text x="1422" y="358" style="font-size:15px;fill:#4a9ee0">?</text>
<path d="M995 386l8 14h-16z" fill="#f3c9a0" stroke="#e0a060"/><rect x="994.500" y="390" width="1.500" height="5" fill="#555"/><rect x="994.500" y="396.500" width="1.500" height="1.500" fill="#555"/>
<text x="1007" y="398" textLength="73" lengthAdjust="spacingAndGlyphs" class="v">Output TIN</text>
<rect x="1007.500" y="403.500" width="393" height="26" class="f"/>
<text x="1012" y="421" textLength="21" lengthAdjust="spacingAndGlyphs" class="v">m9</text>
<use href="#fo" x="1410" y="407"/>
<text x="1007" y="451" textLength="125" lengthAdjust="spacingAndGlyphs" class="v">Coordinate System</text>
<rect x="1007.500" y="456.500" width="393" height="26" class="f"/><path d="M1390 468h8l-4 4z" class="ar"/>
<circle cx="1420" cy="468" r="10" fill="#b8b8b8" stroke="#888"/><path d="M1410 468h20M1420 458v20M1413 461h14M1413 475h14M1420 458c-7 6-7 14 0 20M1420 458c7 6 7 14 0 20" stroke="#666" fill="none" stroke-width=".7"/>
<text x="1007" y="505" textLength="124" lengthAdjust="spacingAndGlyphs" class="v">Input Feature Class</text>
<circle cx="1150" cy="499" r="10" fill="none" stroke="#666" stroke-width="1.300"/><path d="M1150 494v10M1145 499h10" stroke="#555" stroke-width="1.500"/>
<circle cx="1177" cy="499" r="10" fill="none" stroke="#666" stroke-width="1.300"/><path d="M1172 497l5 5 5-5" fill="none" stroke="#555" stroke-width="1.500"/>

<text x="1127" y="534" textLength="93" lengthAdjust="spacingAndGlyphs" class="l">Input Features</text>
<rect x="1225.500" y="514.500" width="174" height="26" class="f"/><text x="1230" y="534" textLength="100" lengthAdjust="spacingAndGlyphs" class="v">ElevationPoints</text><path d="M1388 526h8l-4 4z" class="ar"/><use href="#fo" x="1408" y="519"/>
<text x="1139" y="564" textLength="81" lengthAdjust="spacingAndGlyphs" class="l">Height Field</text>
<rect x="1225.500" y="544.500" width="206" height="26" class="f"/><text x="1230" y="564" textLength="61" lengthAdjust="spacingAndGlyphs" class="v">Elevation</text><path d="M1420 556h8l-4 4z" class="ar"/>
<text x="1190" y="594" textLength="30" lengthAdjust="spacingAndGlyphs" class="l">Type</text>
<rect x="1225.500" y="574.500" width="206" height="26" class="f"/><text x="1230" y="594" textLength="78" lengthAdjust="spacingAndGlyphs" class="v">Mass_Points</text><path d="M1420 586h8l-4 4z" class="ar"/>
<text x="1161" y="624" textLength="59" lengthAdjust="spacingAndGlyphs" class="l">Tag Field</text>
<rect x="1225.500" y="604.500" width="206" height="26" class="f"/><text x="1230" y="624" textLength="55" lengthAdjust="spacingAndGlyphs" class="v">&lt;None&gt;</text><path d="M1420 616h8l-4 4z" class="ar"/>

<rect x="1008" y="634" width="8" height="120" fill="#dcdcdc"/><rect x="1018" y="634" width="413" height="1" fill="#e0e0e0"/>
<text x="1127" y="657" textLength="93" lengthAdjust="spacingAndGlyphs" class="l">Input Features</text>
<rect x="1225.500" y="637.500" width="174" height="27" class="f"/><text x="1230" y="657" textLength="136" lengthAdjust="spacingAndGlyphs" class="v">StudyArea_Ramallah</text><path d="M1388 649h8l-4 4z" class="ar"/><use href="#fo" x="1408" y="642"/>
<text x="1139" y="687" textLength="81" lengthAdjust="spacingAndGlyphs" class="l">Height Field</text>
<rect x="1225.500" y="668.500" width="206" height="26" class="f"/><text x="1231" y="687" textLength="55" lengthAdjust="spacingAndGlyphs" class="v">&lt;None&gt;</text><path d="M1420 680h8l-4 4z" class="ar"/>
<text x="1190" y="717" textLength="30" lengthAdjust="spacingAndGlyphs" class="l">Type</text>
<rect x="1225.500" y="698.500" width="206" height="26" class="f"/><text x="1230" y="717" textLength="59" lengthAdjust="spacingAndGlyphs" class="v">Soft_Clip</text><path d="M1420 710h8l-4 4z" class="ar"/>
<text x="1161" y="747" textLength="59" lengthAdjust="spacingAndGlyphs" class="l">Tag Field</text>
<rect x="1225.500" y="728.500" width="206" height="26" class="f"/><text x="1231" y="747" textLength="55" lengthAdjust="spacingAndGlyphs" class="v">&lt;None&gt;</text><path d="M1420 740h8l-4 4z" class="ar"/>
<rect x="1007.500" y="766.500" width="17" height="17" class="cb"/>
<text x="1030" y="780" textLength="145" lengthAdjust="spacingAndGlyphs" class="v">Constrained Delaunay</text>
<rect x="1326.500" y="810.500" width="87" height="29" fill="#fff" stroke="#1a8fd0" stroke-width="1.200"/>
<text x="1346" y="832" textLength="25" lengthAdjust="spacingAndGlyphs" style="font-size:15px;fill:#555">Run</text>
<circle cx="1387" cy="825" r="9" fill="#cfe8f8" stroke="#4a9ed8" stroke-dasharray="3 1"/><path d="M1384 820l8 5-8 5z" fill="#3d9ae0"/>
<rect x="1415.500" y="810.500" width="20" height="29" fill="#f7f7f7" stroke="#555"/><path d="M1421 823h9l-4.500 4z" fill="#333"/>
<rect x="989" y="848" width="450" height="57" fill="#e3efe3"/>
<circle cx="1014" cy="877" r="10" fill="#5cab68"/><path d="M1009 877l4 4 7-8" fill="none" stroke="#fff" stroke-width="2.400"/>
<text x="1042" y="870" textLength="149" lengthAdjust="spacingAndGlyphs" style="font-size:15px;fill:#555">Create TIN completed.</text>
<text x="1042" y="895" textLength="82" lengthAdjust="spacingAndGlyphs" style="font-size:15px;fill:#5f9a68">View Details</text>
<text x="1133" y="895" textLength="87" lengthAdjust="spacingAndGlyphs" style="font-size:15px;fill:#5f9a68">Open History</text>
<path d="M1419.500 871l10 11M1429.500 871l-10 11" stroke="#8a9a8a" stroke-width="1.500"/>

<!-- orange annotations -->
<path class="sc" stroke-width="9" transform="translate(250 230) scale(.33333)" d="M640 140Q650 128 660 131.500Q670 135 695 145Q720 155 732.500 170Q745 185 767.500 205Q790 225 800 242.500Q810 260 807.500 291Q805 322 775 329.500Q745 337 717.500 344.500Q690 352 685 376Q680 400 650 407.500Q620 415 590 425Q560 435 552.500 445Q545 455 545 475Q545 495 517.500 507.500Q490 520 460 527.500Q430 535 407.500 552.500Q385 570 376.500 585Q368 600 377.500 616Q387 632 366 627Q345 622 322.500 612.500Q300 603 291.500 589Q283 575 291.500 552.500Q300 530 320 512.500Q340 495 362.500 467.500Q385 440 385 422.500Q385 405 367.500 385Q350 365 336 347.500Q322 330 326 307.500Q330 285 350 273.500Q370 262 412.500 250Q455 238 452.500 216.500Q450 195 460 186.500Q470 178 522.500 179Q575 180 655 188"/>
<path class="sc" stroke-width="10" transform="translate(0 600) scale(.33333)" d="M770 125Q860 125 895 135Q930 145 957.500 160Q985 175 987.500 190Q990 205 1020 222.500Q1050 240 1050 290Q1050 340 1057.500 355Q1065 370 1122.500 392.500Q1180 415 1187.500 452.500Q1195 490 1202.500 500Q1210 510 1270 545Q1330 580 1334 600Q1338 620 1334 637.500Q1330 655 1295 680Q1260 705 1215 727.500Q1170 750 1100 749Q1030 748 990 743Q950 738 915 726.500Q880 715 867.500 692.500Q855 670 855 610Q855 550 837.500 530Q820 510 792.500 487.500Q765 465 765 432.500Q765 400 777.500 360Q790 320 782.500 290Q775 260 763.500 235Q752 210 761 180Q770 150 800 130"/>
<path class="sc" stroke-width="10" transform="translate(500 600) scale(.33333)" d="M100 750Q40 753 22.500 764Q5 775 5 787.500Q5 800 22.500 820Q40 840 42.500 865Q45 890 25 930Q5 970 5 987.500Q5 1005 32.500 1017.500Q60 1030 92.500 1045Q125 1060 132.500 1085Q140 1110 167.500 1135Q195 1160 242.500 1162.500Q290 1165 355 1130Q420 1095 460 1090Q500 1085 545 1077.500Q590 1070 600 1050Q610 1030 590 1005Q570 980 510 952.500Q450 925 420 910Q390 895 387.500 872.500Q385 850 352.500 830Q320 810 260 785Q200 760 120 742"/>
<path class="sc" stroke-width="10" transform="translate(0 190) scale(.33333)" d="M90 963.500Q80 965 55 992.500Q30 1020 25 1045Q20 1070 40 1100Q60 1130 95 1150Q130 1170 190 1172.500Q250 1175 315 1165Q380 1155 450 1147.500Q520 1140 580 1125Q640 1110 667.500 1080Q695 1050 687.500 1030Q680 1010 640 992.500Q600 975 525 975Q450 975 375 970Q300 965 240 960Q180 955 140 958.500Q100 962 90 963.500Z"/>
<path class="sc" stroke-width="10" transform="translate(980 620) scale(.33670 .33333)" d="M1075 -2Q1180 5 1202.500 22.500Q1225 40 1225 70Q1225 100 1207.500 115Q1190 130 1145 132.500Q1100 135 1025 137.500Q950 140 905 144Q860 148 800 139Q740 130 715 120Q690 110 682.500 95Q675 80 687.500 62.500Q700 45 740 42.500Q780 40 825 42.500Q870 45 945 46.500Q1020 48 1050 39Q1080 30 1190 30"/>
<path class="sc" stroke-width="10" transform="translate(980 620) scale(.33670 .33333)" d="M1000 240Q880 235 815 233.500Q750 232 705 226Q660 220 635 232.500Q610 245 601 265Q592 285 611 302.500Q630 320 665 324Q700 328 835 329Q970 330 995 317.500Q1020 305 1022.500 290Q1025 275 1002.500 260Q980 245 900 235"/>
<path class="sc" stroke-width="9" transform="translate(980 620) scale(.33670 .33333)" d="M1098 240L1105 290L1115 332L1200 290Q1265 265 1330 240L1400 205L1450 170"/>
</svg>
</body></html>
